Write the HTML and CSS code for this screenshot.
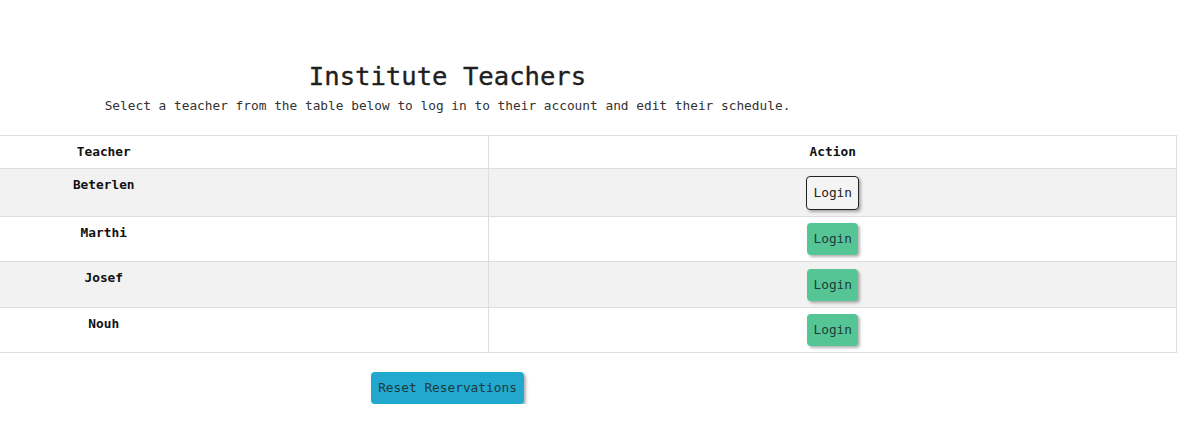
FILE: index.html
```html
<!DOCTYPE html>
<html lang="en">
<head>
<meta charset="utf-8">
<title>Institute Teachers</title>
<link rel="stylesheet" href="styles.css">
</head>
<body>
<main class="page">
  <h1 class="title">Institute Teachers</h1>
  <p class="subtitle">Select a teacher from the table below to log in to their account and edit their schedule.</p>
  <table class="teachers">
    <colgroup><col class="col-name"><col class="col-action"></colgroup>
    <thead>
      <tr><th>Teacher</th><th>Action</th></tr>
    </thead>
    <tbody>
      <tr><td class="name">Beterlen</td><td class="action"><button class="btn login focused">Login</button></td></tr>
      <tr><td class="name">Marthi</td><td class="action"><button class="btn login">Login</button></td></tr>
      <tr><td class="name">Josef</td><td class="action"><button class="btn login">Login</button></td></tr>
      <tr><td class="name">Nouh</td><td class="action"><button class="btn login">Login</button></td></tr>
    </tbody>
  </table>
  <button class="btn reset">Reset Reservations</button>
</main>
</body>
</html>
```
FILE: styles.css
```css
html, body {
  margin: 0;
  padding: 0;
  background: #ffffff;
  overflow: hidden;
}
body {
  font-family: "DejaVu Sans Mono", "Liberation Mono", monospace;
  font-size: 12.8px;
  color: #222222;
}
.page {
  width: 895px;
  display: flex;
  flex-direction: column;
  align-items: center;
  padding-top: 61px;
}
.title {
  margin: 0;
  font-size: 25.6px;
  line-height: 30px;
  font-weight: 500;
  color: #1e1e1e;
  -webkit-text-stroke: 0.35px #1e1e1e;
}
.subtitle {
  margin: 6px 0 20px;
  line-height: 18px;
  font-size: 12.8px;
  color: #333;
}
.teachers {
  flex: none;
  width: 1459px;
  border-collapse: collapse;
  border: 1px solid #dddddd;
}
.col-name { width: 771px; }
.col-action { width: 688px; }
.teachers th {
  padding: 8px;
  line-height: 16px;
  font-weight: bold;
  color: #111;
  text-align: center;
  border-bottom: 1px solid #dddddd;
  border-right: 1px solid #dddddd;
  background: #fff;
}
.teachers td {
  border-bottom: 1px solid #dddddd;
  border-right: 1px solid #dddddd;
  text-align: center;
}
.teachers tbody tr:nth-child(odd) td { background: #f2f2f2; }
.teachers tbody tr:nth-child(even) td { background: #ffffff; }
.name {
  vertical-align: top;
  padding: 8px 8px 0;
  line-height: 16px;
  font-weight: bold;
  color: #111;
}
.action {
  padding: 6.5px 8px 6px;
  vertical-align: middle;
}
.btn {
  font-family: inherit;
  font-size: 12.8px;
  line-height: 16px;
  padding: 8px 6px;
  border: none;
  border-radius: 4px;
  color: #1d3b3b;
  box-shadow: 2px 2px 3px rgba(0, 0, 0, 0.3);
  cursor: pointer;
}
.login {
  background: #56c596;
}
.login.focused {
  background: #f4f4f4;
  border: 1px solid #222;
  color: #222;
}
.reset {
  margin-top: 19px;
  background: #22a8cf;
  padding: 8px 7px;
}
```
